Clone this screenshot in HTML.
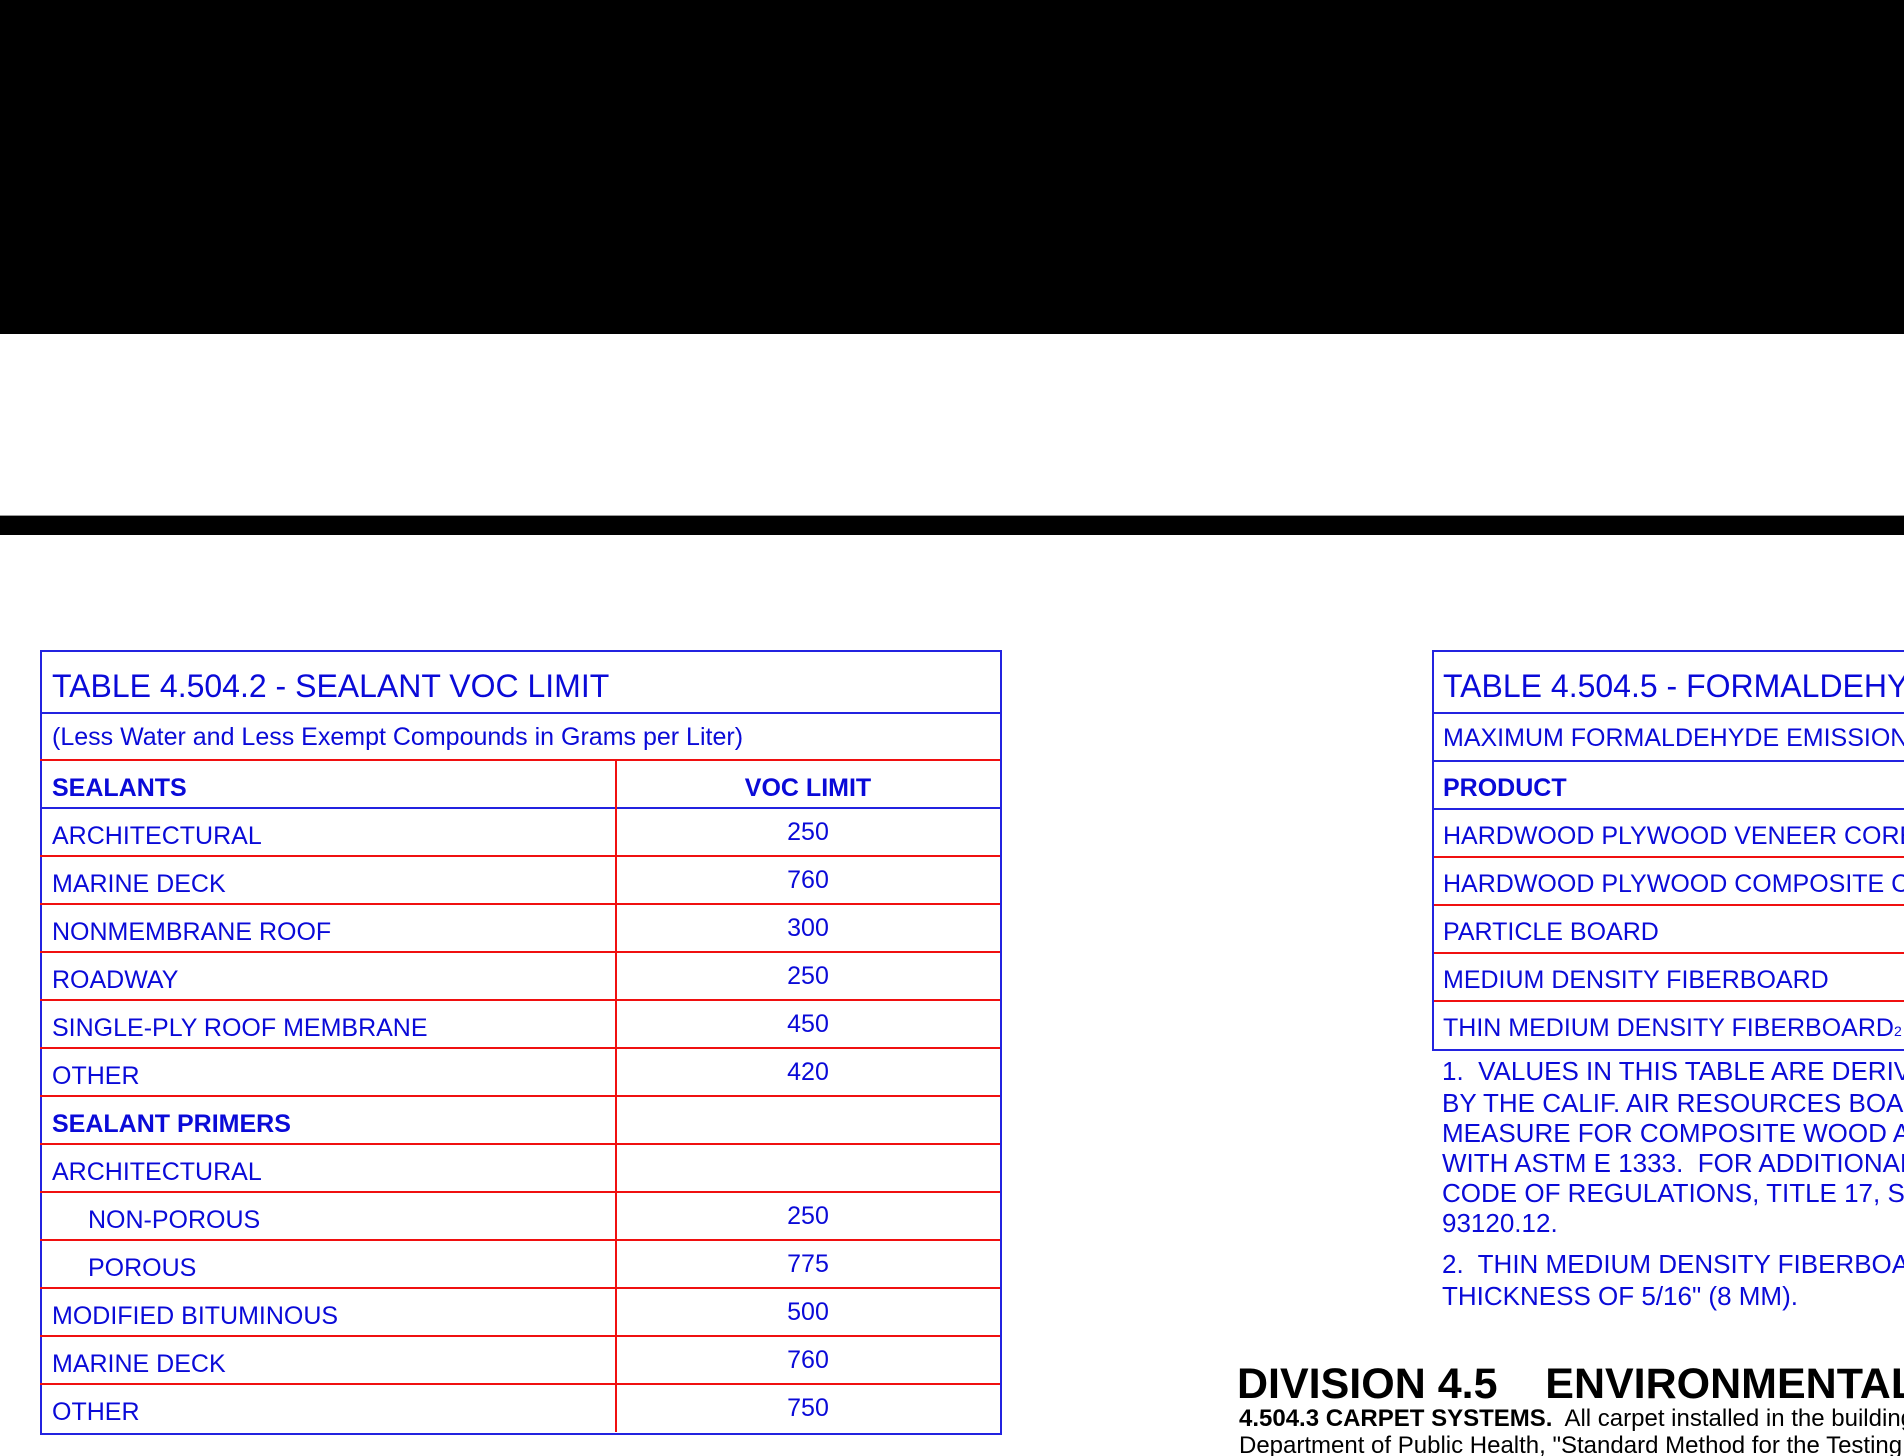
<!DOCTYPE html>
<html><head><meta charset="utf-8"><style>
html,body{margin:0;padding:0;width:1904px;height:1456px;overflow:hidden;background:#fff;font-family:"Liberation Sans",Arial,sans-serif;}
#w{position:relative;width:1904px;height:1456px;overflow:hidden;}
.abs{position:absolute;}
.t{position:absolute;color:#0a0ad8;font-size:25px;white-space:nowrap;line-height:1;}
.b{font-weight:bold;}
.hl{position:absolute;height:2px;}
.blue{background:#2323e0;}
.red{background:#f01010;}
.fn{font-size:26px;}
</style></head><body><div id="w">
<div class="abs" style="left:0;top:0;width:1904px;height:334px;background:#000"></div>
<div class="abs" style="left:0;top:515px;width:1904px;height:1px;background:#999"></div>
<div class="abs" style="left:0;top:516px;width:1904px;height:19px;background:#000"></div>

<!-- LEFT TABLE -->
<div class="abs" style="left:40px;top:650px;width:958px;height:781px;border:2px solid #2323e0;"></div>
<div class="hl blue" style="left:40px;top:712px;width:960px"></div>
<div class="hl red" style="left:40px;top:759px;width:960px"></div>
<div class="hl blue" style="left:40px;top:807px;width:960px"></div>
<div class="hl red" style="left:40px;top:855px;width:960px"></div>
<div class="hl red" style="left:40px;top:903px;width:960px"></div>
<div class="hl red" style="left:40px;top:951px;width:960px"></div>
<div class="hl red" style="left:40px;top:999px;width:960px"></div>
<div class="hl red" style="left:40px;top:1047px;width:960px"></div>
<div class="hl red" style="left:40px;top:1095px;width:960px"></div>
<div class="hl red" style="left:40px;top:1143px;width:960px"></div>
<div class="hl red" style="left:40px;top:1191px;width:960px"></div>
<div class="hl red" style="left:40px;top:1239px;width:960px"></div>
<div class="hl red" style="left:40px;top:1287px;width:960px"></div>
<div class="hl red" style="left:40px;top:1335px;width:960px"></div>
<div class="hl red" style="left:40px;top:1383px;width:960px"></div>
<div class="abs red" style="left:615px;top:760px;width:2px;height:672px"></div>

<div class="t" style="left:52px;top:670px;font-size:32px">TABLE 4.504.2 - SEALANT VOC LIMIT</div>
<div class="t" style="left:52px;top:725px">(Less Water and Less Exempt Compounds in Grams per Liter)</div>
<div class="t b" style="left:52px;top:776px">SEALANTS</div>
<div class="t b" style="left:616px;width:384px;text-align:center;top:776px">VOC LIMIT</div>

<div class="t" style="left:52px;top:824px">ARCHITECTURAL</div><div class="t" style="left:616px;width:384px;text-align:center;top:820px">250</div>
<div class="t" style="left:52px;top:872px">MARINE DECK</div><div class="t" style="left:616px;width:384px;text-align:center;top:868px">760</div>
<div class="t" style="left:52px;top:920px">NONMEMBRANE ROOF</div><div class="t" style="left:616px;width:384px;text-align:center;top:916px">300</div>
<div class="t" style="left:52px;top:968px">ROADWAY</div><div class="t" style="left:616px;width:384px;text-align:center;top:964px">250</div>
<div class="t" style="left:52px;top:1016px">SINGLE-PLY ROOF MEMBRANE</div><div class="t" style="left:616px;width:384px;text-align:center;top:1012px">450</div>
<div class="t" style="left:52px;top:1064px">OTHER</div><div class="t" style="left:616px;width:384px;text-align:center;top:1060px">420</div>
<div class="t b" style="left:52px;top:1112px">SEALANT PRIMERS</div>
<div class="t" style="left:52px;top:1160px">ARCHITECTURAL</div>
<div class="t" style="left:88px;top:1208px">NON-POROUS</div><div class="t" style="left:616px;width:384px;text-align:center;top:1204px">250</div>
<div class="t" style="left:88px;top:1256px">POROUS</div><div class="t" style="left:616px;width:384px;text-align:center;top:1252px">775</div>
<div class="t" style="left:52px;top:1304px">MODIFIED BITUMINOUS</div><div class="t" style="left:616px;width:384px;text-align:center;top:1300px">500</div>
<div class="t" style="left:52px;top:1352px">MARINE DECK</div><div class="t" style="left:616px;width:384px;text-align:center;top:1348px">760</div>
<div class="t" style="left:52px;top:1400px">OTHER</div><div class="t" style="left:616px;width:384px;text-align:center;top:1396px">750</div>

<!-- RIGHT TABLE -->
<div class="abs" style="left:1432px;top:650px;width:472px;height:397px;border:2px solid #2323e0;border-right:none;"></div>
<div class="hl blue" style="left:1432px;top:712px;width:472px"></div>
<div class="hl blue" style="left:1432px;top:760px;width:472px"></div>
<div class="hl blue" style="left:1432px;top:808px;width:472px"></div>
<div class="hl red" style="left:1434px;top:856px;width:470px"></div>
<div class="hl red" style="left:1434px;top:904px;width:470px"></div>
<div class="hl red" style="left:1434px;top:952px;width:470px"></div>
<div class="hl red" style="left:1434px;top:1000px;width:470px"></div>

<div class="t" style="left:1443px;top:670px;font-size:32px">TABLE 4.504.5 - FORMALDEHYDE LIMITS</div>
<div class="t" style="left:1443px;top:726px">MAXIMUM FORMALDEHYDE EMISSIONS IN PARTS PER MILLION</div>
<div class="t b" style="left:1443px;top:776px">PRODUCT</div>
<div class="t" style="left:1443px;top:824px">HARDWOOD PLYWOOD VENEER CORE</div>
<div class="t" style="left:1443px;top:872px">HARDWOOD PLYWOOD COMPOSITE CORE</div>
<div class="t" style="left:1443px;top:920px">PARTICLE BOARD</div>
<div class="t" style="left:1443px;top:968px">MEDIUM DENSITY FIBERBOARD</div>
<div class="t" style="left:1443px;top:1016px">THIN MEDIUM DENSITY FIBERBOARD<span style="font-size:14px">2</span></div>

<div class="t fn" style="left:1442px;top:1058px">1.&nbsp; VALUES IN THIS TABLE ARE DERIVED FROM THOSE SPECIFIED</div>
<div class="t fn" style="left:1442px;top:1090px">BY THE CALIF. AIR RESOURCES BOARD, AIR TOXICS CONTROL</div>
<div class="t fn" style="left:1442px;top:1120px">MEASURE FOR COMPOSITE WOOD AS TESTED IN ACCORDANCE</div>
<div class="t fn" style="left:1442px;top:1150px">WITH ASTM E 1333.&nbsp; FOR ADDITIONAL INFORMATION, SEE CALIF.</div>
<div class="t fn" style="left:1442px;top:1180px">CODE OF REGULATIONS, TITLE 17, SECTIONS 93120 THROUGH</div>
<div class="t fn" style="left:1442px;top:1210px">93120.12.</div>
<div class="t fn" style="left:1442px;top:1251px">2.&nbsp; THIN MEDIUM DENSITY FIBERBOARD HAS A MAXIMUM</div>
<div class="t fn" style="left:1442px;top:1283px">THICKNESS OF 5/16" (8 MM).</div>

<div class="abs" style="left:1237px;top:1363px;font-size:43px;font-weight:bold;color:#000;white-space:nowrap;line-height:1;">DIVISION 4.5&nbsp;&nbsp;&nbsp; ENVIRONMENTAL QUALITY</div>
<div class="abs" style="left:1239px;top:1407px;font-size:24px;color:#000;white-space:nowrap;line-height:1;"><b>4.504.3 CARPET SYSTEMS.</b>&nbsp; All carpet installed in the building interior shall meet the testing and product</div>
<div class="abs" style="left:1239px;top:1434px;font-size:24px;color:#000;white-space:nowrap;line-height:1;">Department of Public Health, "Standard Method for the Testing and Evaluation of Volatile</div>
</div></body></html>
